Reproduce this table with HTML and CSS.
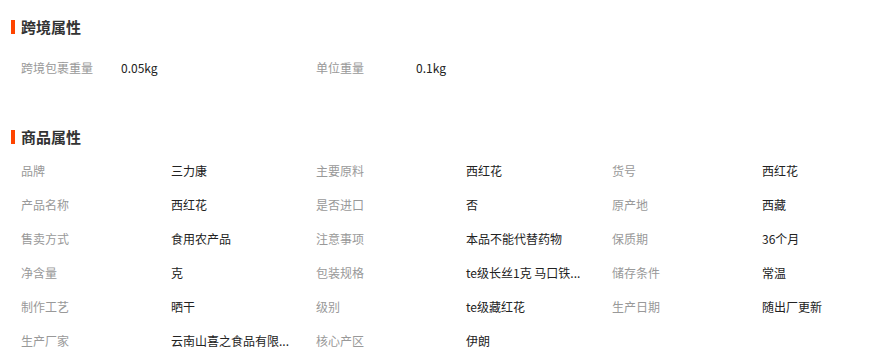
FILE: index.html
```html
<!DOCTYPE html>
<html lang="zh-CN">
<head>
<meta charset="utf-8">
<link rel="stylesheet" href="styles.css">
</head>
<body>
<div class="page">
  <section class="section section-first">
    <h2 class="title">跨境属性</h2>
    <div class="grid grid-cross">
      <div class="pair"><span class="label">跨境包裹重量</span><span class="value">0.05kg</span></div>
      <div class="pair"><span class="label">单位重量</span><span class="value">0.1kg</span></div>
    </div>
  </section>
  <section class="section">
    <h2 class="title">商品属性</h2>
    <div class="grid grid-attrs">
      <div class="pair"><span class="label">品牌</span><span class="value">三力康</span></div>
      <div class="pair"><span class="label">主要原料</span><span class="value">西红花</span></div>
      <div class="pair"><span class="label">货号</span><span class="value">西红花</span></div>
      <div class="pair"><span class="label">产品名称</span><span class="value">西红花</span></div>
      <div class="pair"><span class="label">是否进口</span><span class="value">否</span></div>
      <div class="pair"><span class="label">原产地</span><span class="value">西藏</span></div>
      <div class="pair"><span class="label">售卖方式</span><span class="value">食用农产品</span></div>
      <div class="pair"><span class="label">注意事项</span><span class="value">本品不能代替药物</span></div>
      <div class="pair"><span class="label">保质期</span><span class="value">36个月</span></div>
      <div class="pair"><span class="label">净含量</span><span class="value">克</span></div>
      <div class="pair"><span class="label">包装规格</span><span class="value">te级长丝1克 马口铁...</span></div>
      <div class="pair"><span class="label">储存条件</span><span class="value">常温</span></div>
      <div class="pair"><span class="label">制作工艺</span><span class="value">晒干</span></div>
      <div class="pair"><span class="label">级别</span><span class="value">te级藏红花</span></div>
      <div class="pair"><span class="label">生产日期</span><span class="value">随出厂更新</span></div>
      <div class="pair"><span class="label">生产厂家</span><span class="value">云南山喜之食品有限...</span></div>
      <div class="pair"><span class="label">核心产区</span><span class="value">伊朗</span></div>
    </div>
  </section>
</div>
</body>
</html>
```
FILE: styles.css
```css
* { box-sizing: border-box; }
html, body { margin: 0; padding: 0; background: #fff; }
body {
  font-family: "Noto Sans CJK SC", "Noto Sans", sans-serif;
  font-size: 12px;
  color: #333;
}
.page { padding: 10px 0 0 11px; }
.section-first { margin-bottom: 35px; }
.title {
  margin: 0;
  height: 34px;
  line-height: 34px;
  font-size: 15px;
  font-weight: bold;
  color: #333;
  display: flex;
  align-items: center;
  gap: 6px;
}
.title::before {
  content: "";
  display: block;
  width: 4px;
  height: 14px;
  background: #ff4400;
}
.grid { display: grid; padding-left: 10px; }
.grid-cross { grid-template-columns: 295px 295px; padding-top: 7px; }
.grid-cross .label { width: 100px; }
.grid-attrs { grid-template-columns: 295px 296px 250px; }
.grid-attrs .label { width: 150px; }
.pair { display: flex; height: 34px; line-height: 34px; }
.label { color: #999; flex: none; }
.value {
  color: #222;
  white-space: nowrap;
}
```
